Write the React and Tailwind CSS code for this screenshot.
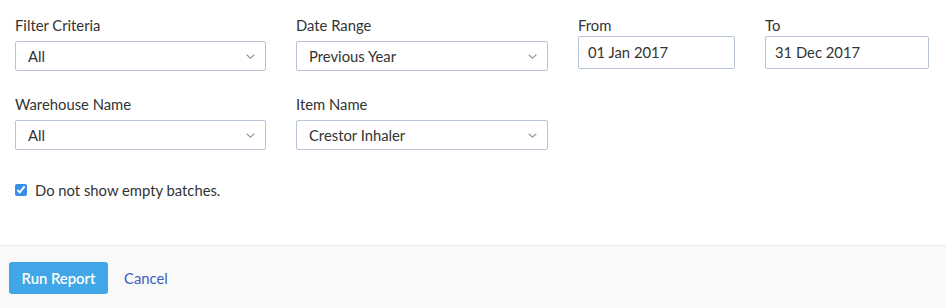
import React, { useState } from "react";

const Chevron = () => (
  <svg width="9" height="5" viewBox="0 0 9 5" className="shrink-0">
    <path d="M0.7 0.7 L4.5 4.2 L8.3 0.7" fill="none" stroke="#9a9a9a" strokeWidth="1.2" />
  </svg>
);

const SelectBox = ({ label, value, width }) => (
  <div className={`flex flex-col ${width}`}>
    <label className="h-5 leading-5 text-[14.8px] text-[#333]">{label}</label>
    <div className="mt-[6px] h-[30px] flex items-center justify-between border border-[#b9c3d6] rounded-[2px] pl-3 pr-[10px] bg-white">
      <span className="text-[14.8px] text-[#333]">{value}</span>
      <Chevron />
    </div>
  </div>
);

const DateBox = ({ label, value, width }) => (
  <div className={`flex flex-col ${width}`}>
    <label className="h-5 leading-5 text-[14.8px] text-[#333]">{label}</label>
    <div className="mt-px h-[33px] flex items-center border border-[#b9c3d6] rounded-[2px] px-[9px] bg-white">
      <span className="text-[14.8px] text-[#333]">{value}</span>
    </div>
  </div>
);

export default function App() {
  const [hideEmpty, setHideEmpty] = useState(true);
  return (
    <div className="w-[946px] h-[308px] bg-white flex flex-col font-['Lato','Liberation_Sans',sans-serif]">
      <div className="pt-[15px] px-[15px] flex-1">
        <div className="flex">
          <SelectBox label="Filter Criteria" value="All" width="w-[251px]" />
          <div className="ml-[30px]">
            <SelectBox label="Date Range" value="Previous Year" width="w-[252px]" />
          </div>
          <div className="ml-[30px]">
            <DateBox label="From" value="01 Jan 2017" width="w-[157px]" />
          </div>
          <div className="ml-[30px]">
            <DateBox label="To" value="31 Dec 2017" width="w-[164px]" />
          </div>
        </div>
        <div className="flex mt-[23px]">
          <SelectBox label="Warehouse Name" value="All" width="w-[251px]" />
          <div className="ml-[30px]">
            <SelectBox label="Item Name" value="Crestor Inhaler" width="w-[252px]" />
          </div>
        </div>
        <label className="mt-[30px] h-5 flex items-center gap-[8px] cursor-pointer">
          <input
            type="checkbox"
            checked={hideEmpty}
            onChange={(e) => setHideEmpty(e.target.checked)}
            className="w-[12px] h-[12px] accent-[#3a8ee6]"
          />
          <span className="text-[14.8px] text-[#333]">Do not show empty batches.</span>
        </label>
      </div>
      <div className="h-[63px] border-t border-[#ebebeb] bg-[#f9f9f9] pt-[16px] pl-[9px] flex items-start">
        <button className="h-[32px] w-[99px] rounded-[3px] bg-[#40a6e7] text-white text-[14.8px] font-semibold">
          Run Report
        </button>
        <button className="ml-[16px] h-[32px] text-[14.8px] text-[#3c5fbd]">Cancel</button>
      </div>
    </div>
  );
}
